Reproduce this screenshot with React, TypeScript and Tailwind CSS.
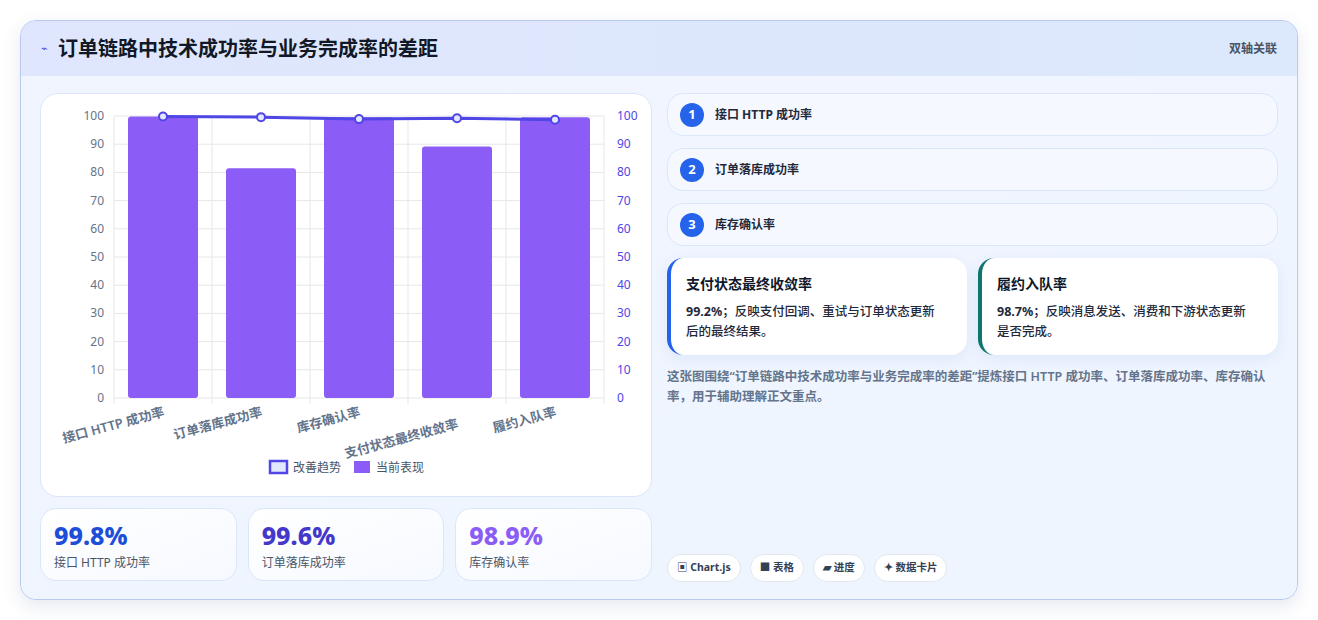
import React from 'react';

const font = { fontFamily: '"Noto Sans", "Noto Sans CJK SC", sans-serif' };

const labels = ['接口 HTTP 成功率', '订单落库成功率', '库存确认率', '支付状态最终收敛率', '履约入队率'];
const bars = [99.8, 81.5, 99.6, 89.2, 99.6];
const line = [99.8, 99.6, 98.9, 99.2, 98.7];

const Chart = () => {
  const L = 73, R = 563, T = 22, B = 304;
  const y = (v: number) => B - ((B - T) * v) / 100;
  const step = (R - L) / 5;
  const ticks = [0, 10, 20, 30, 40, 50, 60, 70, 80, 90, 100];
  return (
    <svg width="611" height="403" className="block">
      {ticks.map((t) => (
        <g key={t}>
          <line x1={L} x2={R} y1={y(t)} y2={y(t)} stroke="#e5e7eb" />
          <text x={L - 10} y={y(t) + 4} textAnchor="end" fontSize="12" fill="#64748b">{t}</text>
          <text x={R + 13} y={y(t) + 4} fontSize="12" fill="#4f46e5">{t}</text>
        </g>
      ))}
      {[0, 1, 2, 3, 4, 5].map((i) => (
        <line key={i} x1={L + i * step} x2={L + i * step} y1={T} y2={B + 6} stroke="#e5e7eb" />
      ))}
      {bars.map((v, i) => (
        <rect key={i} x={L + i * step + 14} y={y(v)} width={step - 28} height={B - y(v)} rx="3" fill="#8b5cf6" />
      ))}
      <polyline
        points={line.map((v, i) => `${L + i * step + step / 2},${y(v)}`).join(' ')}
        fill="none"
        stroke="#4f46e5"
        strokeWidth="3"
      />
      {line.map((v, i) => (
        <circle key={i} cx={L + i * step + step / 2} cy={y(v)} r="4" fill="#e0e7ff" stroke="#4f46e5" strokeWidth="2" />
      ))}
      {labels.map((l, i) => {
        const x = L + i * step + step / 2 + 2;
        const yy = B + (i === 3 ? 30 : 18);
        return (
          <text key={l} x={x} y={yy} textAnchor="end" fontSize="13" fontWeight="600" fill="#64748b" transform={`rotate(-15 ${x} ${yy})`}>
            {l}
          </text>
        );
      })}
      <rect x="229" y="367" width="17" height="12" fill="#e0e7ff" stroke="#4f46e5" strokeWidth="2.5" />
      <text x="252" y="378" fontSize="12" fill="#475569">改善趋势</text>
      <rect x="313" y="367" width="16" height="12" fill="#8b5cf6" />
      <text x="335" y="378" fontSize="12" fill="#475569">当前表现</text>
    </svg>
  );
};

const Stat = ({ v, l, c }: { v: string; l: string; c: string }) => (
  <div className="flex-1 rounded-2xl border border-[#dbe6fb] bg-gradient-to-br from-white to-[#f6f9ff] px-[13px] pt-[11px] h-[73px]">
    <div className={`text-[25px] font-extrabold leading-[30px] ${c}`}>{v}</div>
    <div className="mt-[4px] text-[12px] text-[#475569]">{l}</div>
  </div>
);

const Item = ({ n, t }: { n: number; t: string }) => (
  <div className="flex h-[43px] items-center gap-[11px] rounded-2xl border border-[#dbe6fb] bg-[#f5f8ff] px-[12px]">
    <span className="flex h-[24px] w-[24px] items-center justify-center rounded-full bg-[#2563eb] text-[13px] font-bold text-white">{n}</span>
    <span className="text-[12px] font-bold text-[#1e293b]">{t}</span>
  </div>
);

const Note = ({ t, d, b, c }: { t: string; d: string; b: string; c: string }) => (
  <div className={`flex-1 rounded-2xl border-l-4 ${c} bg-white pl-[15px] pr-[20px] pt-[16px] h-[97px] shadow-[0_4px_14px_rgba(100,130,200,0.12)]`}>
    <div className="text-[14px] font-bold leading-[20px] text-[#0f172a]">{t}</div>
    <div className="mt-[8px] text-[12.5px] leading-[20px] font-medium text-[#1e293b]">
      <b>{b}</b>；{d}
    </div>
  </div>
);

const Tag = ({ children }: { children: React.ReactNode }) => (
  <span className="rounded-full border border-[#e2e8f0] bg-white px-[9px] py-[5px] text-[10.5px] font-bold text-[#334155]">{children}</span>
);

export default function App() {
  return (
    <div style={font} className="h-[620px] w-[1318px] bg-white p-[20px]">
      <div className="h-[580px] overflow-hidden rounded-2xl border border-[#b9c9f0] bg-[#eef4ff] shadow-[0_6px_18px_rgba(80,100,160,0.15)]">
        <div className="flex h-[55px] items-center justify-between bg-gradient-to-r from-[#dfe6fd] to-[#dce8fc] px-[20px]">
          <div className="flex items-center gap-[10px]">
            <span className="text-[11px] text-[#4f46e5]">⌁</span>
            <span className="text-[20px] font-bold text-[#111827]">订单链路中技术成功率与业务完成率的差距</span>
          </div>
          <span className="text-[12px] font-semibold text-[#475569]">双轴关联</span>
        </div>
        <div className="flex gap-[15px] bg-gradient-to-br from-[#f1f5ff] to-[#eef5ff] px-[19px] pt-[17px] h-[525px]">
          <div className="flex w-[612px] flex-col gap-[11px]">
            <div className="h-[404px] rounded-[18px] border border-[#dbe6fb] bg-white">
              <Chart />
            </div>
            <div className="flex gap-[11px]">
              <Stat v="99.8%" l="接口 HTTP 成功率" c="text-[#1d4ed8]" />
              <Stat v="99.6%" l="订单落库成功率" c="text-[#4338ca]" />
              <Stat v="98.9%" l="库存确认率" c="text-[#8b5cf6]" />
            </div>
          </div>
          <div className="flex w-[612px] flex-col">
            <div className="flex flex-col gap-[12px]">
              <Item n={1} t="接口 HTTP 成功率" />
              <Item n={2} t="订单落库成功率" />
              <Item n={3} t="库存确认率" />
            </div>
            <div className="mt-[12px] flex gap-[11px]">
              <Note t="支付状态最终收敛率" b="99.2%" d="反映支付回调、重试与订单状态更新后的最终结果。" c="border-[#2563eb]" />
              <Note t="履约入队率" b="98.7%" d="反映消息发送、消费和下游状态更新是否完成。" c="border-[#0f766e]" />
            </div>
            <p className="mt-[12px] text-[12.5px] leading-[20px] font-semibold text-[#64748b]">
              这张图围绕“订单链路中技术成功率与业务完成率的差距”提炼接口 HTTP 成功率、订单落库成功率、库存确认率，用于辅助理解正文重点。
            </p>
            <div className="mt-auto mb-[19px] flex gap-[9px]">
              <Tag>▣ Chart.js</Tag>
              <Tag>■ 表格</Tag>
              <Tag>▰ 进度</Tag>
              <Tag>✦ 数据卡片</Tag>
            </div>
          </div>
        </div>
      </div>
    </div>
  );
}
